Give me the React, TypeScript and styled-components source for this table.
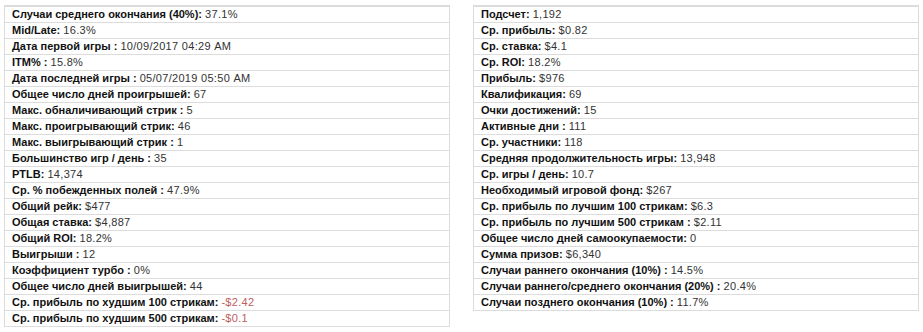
import styled, { createGlobalStyle } from "styled-components";

type Stat = { label: string; value: string; negative?: boolean };

const leftStats: Stat[] = [
  { label: "Случаи среднего окончания (40%):", value: "37.1%" },
  { label: "Mid/Late:", value: "16.3%" },
  { label: "Дата первой игры :", value: "10/09/2017 04:29 AM" },
  { label: "ITM% :", value: "15.8%" },
  { label: "Дата последней игры :", value: "05/07/2019 05:50 AM" },
  { label: "Общее число дней проигрышей:", value: "67" },
  { label: "Макс. обналичивающий стрик :", value: "5" },
  { label: "Макс. проигрывающий стрик:", value: "46" },
  { label: "Макс. выигрывающий стрик :", value: "1" },
  { label: "Большинство игр / день :", value: "35" },
  { label: "PTLB:", value: "14,374" },
  { label: "Ср. % побежденных полей :", value: "47.9%" },
  { label: "Общий рейк:", value: "$477" },
  { label: "Общая ставка:", value: "$4,887" },
  { label: "Общий ROI:", value: "18.2%" },
  { label: "Выигрыши :", value: "12" },
  { label: "Коэффициент турбо :", value: "0%" },
  { label: "Общее число дней выигрышей:", value: "44" },
  { label: "Ср. прибыль по худшим 100 стрикам:", value: "-$2.42", negative: true },
  { label: "Ср. прибыль по худшим 500 стрикам:", value: "-$0.1", negative: true },
];

const rightStats: Stat[] = [
  { label: "Подсчет:", value: "1,192" },
  { label: "Ср. прибыль:", value: "$0.82" },
  { label: "Ср. ставка:", value: "$4.1" },
  { label: "Ср. ROI:", value: "18.2%" },
  { label: "Прибыль:", value: "$976" },
  { label: "Квалификация:", value: "69" },
  { label: "Очки достижений:", value: "15" },
  { label: "Активные дни :", value: "111" },
  { label: "Ср. участники:", value: "118" },
  { label: "Средняя продолжительность игры:", value: "13,948" },
  { label: "Ср. игры / день:", value: "10.7" },
  { label: "Необходимый игровой фонд:", value: "$267" },
  { label: "Ср. прибыль по лучшим 100 стрикам:", value: "$6.3" },
  { label: "Ср. прибыль по лучшим 500 стрикам :", value: "$2.11" },
  { label: "Общее число дней самоокупаемости:", value: "0" },
  { label: "Сумма призов:", value: "$6,340" },
  { label: "Случаи раннего окончания (10%) :", value: "14.5%" },
  { label: "Случаи раннего/среднего окончания (20%) :", value: "20.4%" },
  { label: "Случаи позднего окончания (10%) :", value: "11.7%" },
];

function StatTable({ stats }: { stats: Stat[] }) {
  return (
    <Table>
      {stats.map((s) => (
        <Row key={s.label}>
          <Label>{s.label}</Label> <Value $negative={s.negative}>{s.value}</Value>
        </Row>
      ))}
    </Table>
  );
}

export default function App() {
  return (
    <>
      <GlobalStyle />
      <Page>
        <StatTable stats={leftStats} />
        <StatTable stats={rightStats} />
      </Page>
    </>
  );
}

const GlobalStyle = createGlobalStyle`
  body {
    margin: 0;
    background: #fff;
    font-family: "Liberation Sans", Arial, sans-serif;
  }
`;

const Page = styled.div`
  display: flex;
  align-items: flex-start;
  gap: 23px;
  padding: 5px 0 0 4px;
`;

const Table = styled.div`
  width: 444px;
  border: 1px solid #dcdcdc;
  border-top: 2px solid #dcdcdc;
  border-bottom: none;
`;

const Row = styled.div`
  height: 15px;
  line-height: 15px;
  padding-left: 7px;
  border-bottom: 1px solid #dcdcdc;
  font-size: 11px;
  white-space: nowrap;
  color: #222;
`;

const Label = styled.span`
  font-weight: bold;
  color: #111;
`;

const Value = styled.span<{ $negative?: boolean }>`
  letter-spacing: 0.3px;
  color: ${(p) => (p.$negative ? "#c0605c" : "#333")};
`;
